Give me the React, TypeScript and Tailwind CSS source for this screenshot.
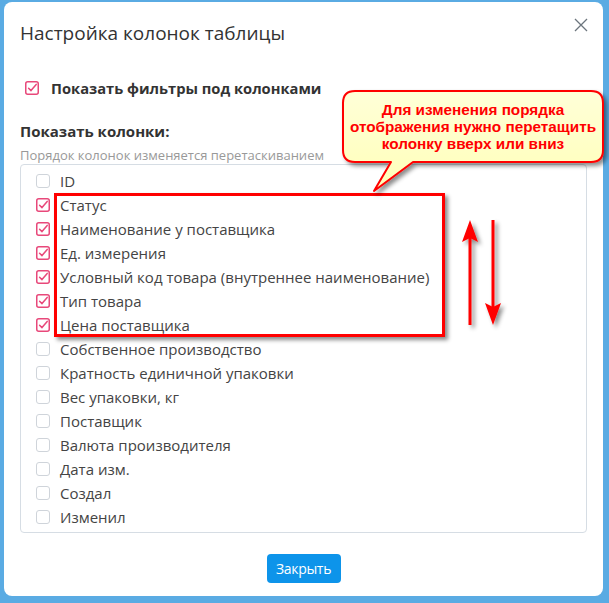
import React from "react";

const items: [string, boolean][] = [
  ["ID", false],
  ["Статус", true],
  ["Наименование у поставщика", true],
  ["Ед. измерения", true],
  ["Условный код товара (внутреннее наименование)", true],
  ["Тип товара", true],
  ["Цена поставщика", true],
  ["Собственное производство", false],
  ["Кратность единичной упаковки", false],
  ["Вес упаковки, кг", false],
  ["Поставщик", false],
  ["Валюта производителя", false],
  ["Дата изм.", false],
  ["Создал", false],
  ["Изменил", false],
];

function Box({ checked }: { checked: boolean }) {
  if (!checked)
    return <span className="block w-[14px] h-[14px] rounded-[3px] border border-[#cfd4da] bg-white shrink-0" />;
  return (
    <svg width="14" height="14" viewBox="0 0 14 14" className="shrink-0">
      <rect x="0.75" y="0.75" width="12.5" height="12.5" rx="2" fill="white" stroke="#e8487a" strokeWidth="1.5" />
      <path d="M3.6 7.2 L6 9.6 L11.2 3.4" fill="none" stroke="#e8487a" strokeWidth="1.5" strokeLinecap="round" strokeLinejoin="round" />
    </svg>
  );
}

export default function App() {
  return (
    <div className="relative w-[609px] h-[603px] bg-[#5aabe3] pl-[4px] pt-[2px] overflow-hidden" style={{ fontFamily: '"Open Sans", sans-serif' }}>
      <div className="w-[599px] h-[594px] bg-white rounded-[8px] px-[16px] pt-[18px] pb-[13px] flex flex-col">
        <div className="flex items-center justify-between">
          <h1 className="text-[19px] leading-[26px] text-[#333]">Настройка колонок таблицы</h1>
          <svg width="14" height="14" viewBox="0 0 14 14" className="-mr-[1px] -mt-[16px]">
            <path d="M1 1 L13 13 M13 1 L1 13" stroke="#6c757d" strokeWidth="1.3" />
          </svg>
        </div>
        <div className="mt-[31px] flex items-center gap-[12px] pl-[5px]">
          <Box checked />
          <span className="text-[14.7px] leading-[22px] font-bold text-[#333]">Показать фильтры под колонками</span>
        </div>
        <div className="mt-[21px] text-[15px] leading-[22px] font-bold text-[#333]">Показать колонки:</div>
        <div className="mt-[4px] text-[13px] leading-[18px] text-[#999]">Порядок колонок изменяется перетаскиванием</div>
        <div className="border border-[#d6dde4] rounded-[4px] pt-[4px] pb-[3px] pl-[15px]">
          {items.map(([label, c]) => (
            <div key={label} className="h-[24px] flex items-center gap-[10px]">
              <Box checked={c} />
              <span className="text-[15px] text-[#444] leading-[24px]">{label}</span>
            </div>
          ))}
        </div>
        <div className="mt-[21px] flex justify-center">
          <button className="h-[29px] w-[74px] rounded-[4px] bg-[#0d94ea] text-white text-[14px] tracking-[-0.3px]">Закрыть</button>
        </div>
      </div>

      {/* red highlight rectangle */}
      <div className="absolute left-[54px] top-[193px] w-[391px] h-[144px] border-[3px] border-[#ff0000] shadow-[3px_3px_4px_rgba(0,0,0,0.45)]" />

      {/* arrows and callout bubble */}
      <svg className="absolute left-0 top-0" width="609" height="603" style={{ pointerEvents: "none" }}>
        <defs>
          <filter id="sh" x="-50%" y="-50%" width="200%" height="200%">
            <feDropShadow dx="3" dy="3" stdDeviation="2" floodColor="#000" floodOpacity="0.45" />
          </filter>
          <linearGradient id="bg" x1="0" y1="0" x2="0" y2="1">
            <stop offset="0" stopColor="#ffffd8" />
            <stop offset="1" stopColor="#ffffb8" />
          </linearGradient>
        </defs>
        <g filter="url(#sh)">
          <line x1="470" y1="325" x2="470" y2="238" stroke="#ff0000" strokeWidth="3" />
          <polygon points="470,220 478,242 470,238 462,242" fill="#ff0000" />
          <line x1="493" y1="220" x2="493" y2="307" stroke="#ff0000" strokeWidth="3" />
          <polygon points="493,325 485,303 493,307 501,303" fill="#ff0000" />
        </g>
        <path
          filter="url(#sh)"
          d="M355 91 H591 Q603 91 603 103 V150 Q603 162 591 162 H413 L374 191 L391 162 H355 Q343 162 343 150 V103 Q343 91 355 91 Z"
          fill="url(#bg)"
          stroke="#ff0000"
          strokeWidth="2"
          strokeLinejoin="round"
        />
      </svg>
      <div
        className="absolute left-[343px] top-[101px] w-[260px] text-center text-[#ff0000] font-bold text-[15.3px] leading-[17px]"
        style={{ fontFamily: '"Liberation Sans", Arial, sans-serif' }}
      >
        Для изменения порядка
        <br />
        отображения нужно перетащить
        <br />
        колонку вверх или вниз
      </div>
    </div>
  );
}
